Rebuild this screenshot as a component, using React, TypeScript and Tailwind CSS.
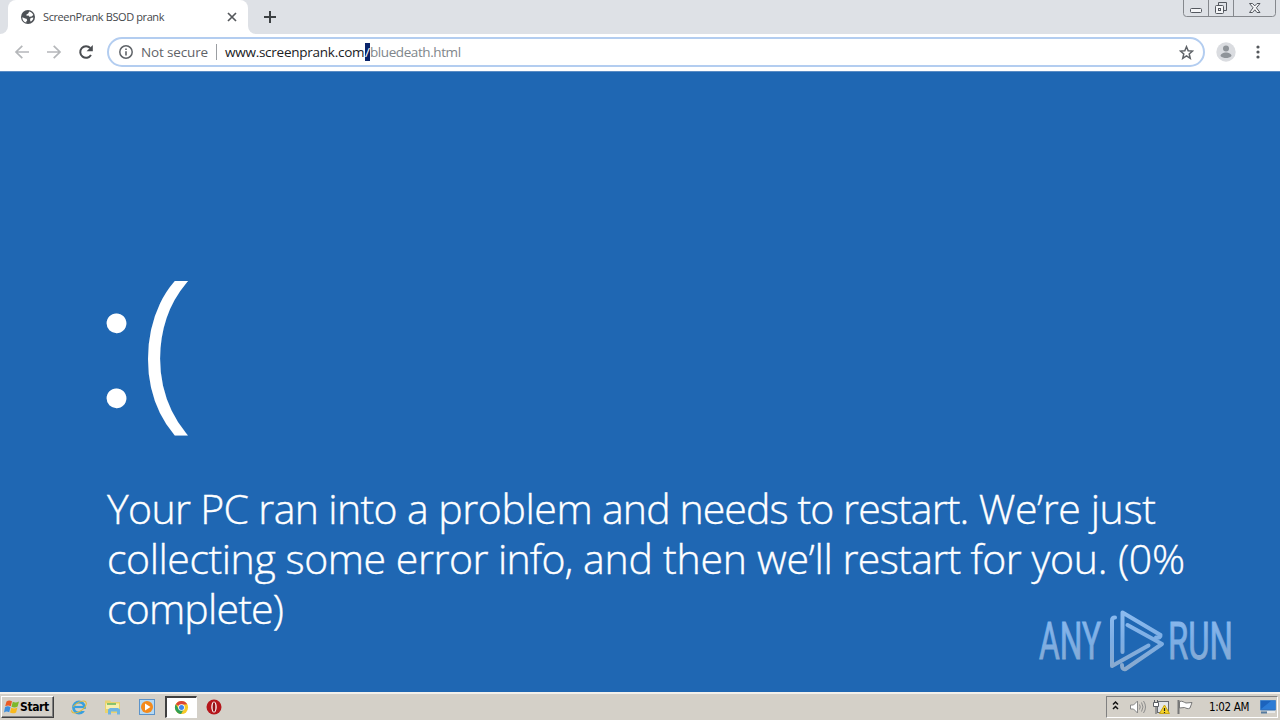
import type { ReactNode } from 'react'

function GlobeIcon() {
  return (
    <svg viewBox="0 0 16 16" className="h-4 w-4">
      <circle cx="8" cy="8" r="7" fill="#4d5156" />
      <path
        d="M2.3 8.2 5.2 9.5l1.4.3.6 1.6-1 1 .2 1.2C3.8 13 2.2 10.8 2.3 8.2zM9.2 2.4c2 .5 3.4 1.700 4.100 3.500l-1.800 1.700-2.200.2-.8-1.300-1.900.2-.2-1.300 1.800-.8zM10.600 9l2.800-.4c-.2 1.800-1.100 3.200-2.600 4.200l-.8-1.700z"
        fill="#fff"
      />
    </svg>
  )
}

function BackIcon() {
  return (
    <svg viewBox="0 0 16 16" className="h-4 w-4" fill="none" stroke="#b5b7ba" strokeWidth="1.700">
      <path d="M15 8H2.500M8.300 1.800 2 8l6.300 6.200" />
    </svg>
  )
}

function ForwardIcon() {
  return (
    <svg viewBox="0 0 16 16" className="h-4 w-4" fill="none" stroke="#b5b7ba" strokeWidth="1.700">
      <path d="M1 8h12.500M7.700 1.800 14 8l-6.300 6.200" />
    </svg>
  )
}

function ReloadIcon() {
  return (
    <svg viewBox="0 0 16 16" className="h-4 w-4">
      <path d="M13 11A5.800 5.800 0 1 1 12.300 4" fill="none" stroke="#4a4d51" strokeWidth="2" />
      <path d="M14.800 1v6.200H8.600z" fill="#4a4d51" />
    </svg>
  )
}

function InfoIcon() {
  return (
    <svg viewBox="0 0 16 16" className="h-4 w-4">
      <circle cx="8" cy="8" r="6.200" fill="none" stroke="#5f6368" strokeWidth="1.500" />
      <path d="M7.200 7.200h1.600v4.200H7.200zM7.200 4.500h1.600v1.600H7.200z" fill="#5f6368" />
    </svg>
  )
}

function StarIcon() {
  return (
    <svg viewBox="0 0 16 16" className="h-[15px] w-[15px]">
      <path
        d="m8 1.800 1.800 4.300 4.700.4-3.600 3.100 1.100 4.600L8 11.700l-4 2.500 1.100-4.600L1.500 6.500l4.700-.4z"
        fill="none"
        stroke="#5f6368"
        strokeWidth="1.600"
      />
    </svg>
  )
}

function WindowButtons() {
  return (
    <svg viewBox="0 0 94 18" className="h-[18px] w-[94px]" fill="none">
      <path d="M.5 0v13.500a3 3 0 0 0 3 3h86a3 3 0 0 0 3-3V0M25.500 0v16.500M50.500 0v16.500" stroke="#85888d" />
      <rect x="7.500" y="8.500" width="11" height="4" rx="1" stroke="#54585f" fill="#f4f5f7" />
      <path d="M35.500 5.500v-3h8v8h-3" stroke="#54585f" />
      <rect x="32.500" y="5.500" width="8" height="8" rx="1" stroke="#54585f" fill="#f4f5f7" />
      <rect x="35.500" y="8.500" width="2" height="2" stroke="#54585f" />
      <path
        d="M66.500 3.500h3l2.300 2.400 2.200-2.400h3l-3.600 4.300 3.600 4.700h-3l-2.200-2.700-2.300 2.700h-3l3.600-4.700z"
        stroke="#54585f"
        fill="#f4f5f7"
      />
    </svg>
  )
}

function TabStrip() {
  return (
    <div className="flex h-[34px] bg-[#dee1e6]">
      <div className="flex w-2 items-end bg-white">
        <div className="h-full w-2 rounded-br-lg bg-[#dee1e6]" />
      </div>
      <div className="flex w-[240px] items-center rounded-t-lg bg-white pr-2 pl-3">
        <GlobeIcon />
        <span className="ml-[7px] flex-1 text-[11px] tracking-[-0.400px] whitespace-nowrap text-[#45484c]">
          ScreenPrank BSOD prank
        </span>
        <svg viewBox="0 0 16 16" className="h-4 w-4" stroke="#55585c" strokeWidth="1.700">
          <path d="m4 4 8 8m0-8-8 8" />
        </svg>
      </div>
      <div className="w-2 bg-white">
        <div className="h-full w-2 rounded-bl-lg bg-[#dee1e6]" />
      </div>
      <svg viewBox="0 0 14 14" className="mt-[10px] ml-[7px] h-[14px] w-[14px]" stroke="#3c4043" strokeWidth="2">
        <path d="M7 1v12M1 7h12" />
      </svg>
      <div className="mr-[3px] ml-auto">
        <WindowButtons />
      </div>
    </div>
  )
}

function Toolbar() {
  return (
    <div className="flex h-[37px] items-center bg-white pb-px">
      <div className="ml-[14px] flex gap-4">
        <BackIcon />
        <ForwardIcon />
        <ReloadIcon />
      </div>
      <div className="ml-[13px] flex h-[30px] w-[1098px] items-center rounded-full border-2 border-[#b3cdf0] pr-[9px] pl-[9px] text-[13.500px]">
        <InfoIcon />
        <span className="ml-[7px] w-[67px] tracking-[-0.150px] whitespace-nowrap text-[#5f6368]">Not secure</span>
        <span className="mx-2 h-4 w-px bg-[#9b9ea2]" />
        <span className="w-[140px] tracking-[-0.250px] whitespace-nowrap text-[#202124]">www.screenprank.com</span>
        <span className="h-[18px] w-[5px] bg-[#0a246a] leading-[18px] text-white">/</span>
        <span className="flex-1 tracking-[-0.420px] whitespace-nowrap text-[#80868b]">bluedeath.html</span>
        <StarIcon />
      </div>
      <svg viewBox="0 0 20 20" className="ml-[11px] h-5 w-5">
        <circle cx="10" cy="10" r="9.700" fill="#dadce0" />
        <circle cx="10" cy="6.500" r="3" fill="#8f9499" />
        <path d="M4.500 14c0-2.200 3-3.500 5.500-3.500s5.500 1.300 5.500 3.500c-1.500 1.500-3.500 2-5.500 2s-4-.5-5.500-2z" fill="#8f9499" />
      </svg>
      <svg viewBox="0 0 4 16" className="ml-5 h-4 w-1" fill="#55585c">
        <circle cx="2" cy="3" r="1.600" />
        <circle cx="2" cy="8" r="1.600" />
        <circle cx="2" cy="13" r="1.600" />
      </svg>
    </div>
  )
}

function Watermark() {
  return (
    <svg viewBox="0 0 220 70" className="absolute right-6 bottom-[17px] h-[70px] w-[220px]">
      <defs>
        <linearGradient id="mark" x1="0" y1="5" x2="0" y2="66" gradientUnits="userSpaceOnUse">
          <stop offset="0" stopColor="#8dbcf0" />
          <stop offset="0.500" stopColor="#7daee4" />
          <stop offset="1" stopColor="#8aa9cb" />
        </linearGradient>
      </defs>
      <g fill="url(#mark)" stroke="url(#mark)" strokeWidth="0.900" fontFamily="Roboto, sans-serif" fontSize="52">
        <text x="3" y="54" textLength="62" lengthAdjust="spacingAndGlyphs">
          ANY
        </text>
        <text x="132" y="54" textLength="65" lengthAdjust="spacingAndGlyphs">
          RUN
        </text>
      </g>
      <g fill="none" stroke="url(#mark)" strokeWidth="4" strokeLinejoin="round" strokeLinecap="round">
        <path d="M120 32.500q5 1 4.500-2.500L86.500 7.500V47" />
        <path d="M79 12.500q-3 0-3 3V61L112.500 40.500" />
        <path d="M86 60q0 5 3.500 4l36.500-25L91.500 20" />
      </g>
    </svg>
  )
}

function CrashPage() {
  return (
    <div className="relative flex-1 overflow-hidden border-t border-[#5b8cc4] bg-[#1f67b3] text-white">
      <div className="mt-[179px] ml-[94px] flex h-[176px] items-end leading-none">
        <span className="w-[43px] font-[Lato,sans-serif] text-[188px] font-light [-webkit-text-stroke:2.4px_white]">
          :
        </span>
        <span className="origin-left scale-x-[1.03] pl-[5px] text-[173px] font-light [-webkit-text-stroke:3px_white]">
          (
        </span>
      </div>
      <div className="mt-[56px] ml-[107px] text-[41px] leading-[50px] font-light whitespace-nowrap [-webkit-text-stroke:0.4px_white]">
        <p>
          <span className="tracking-[-0.650px]">Your PC ran into a</span>
          <span className="tracking-[-0.400px]"> problem</span>
          <span className="tracking-[-0.900px]"> and needs to restart.</span>
          <span className="tracking-[-0.360px]"> We’re just</span>
        </p>
        <p className="tracking-[-0.430px]">
          collecting some error
          <span className="tracking-[-0.800px]"> info,</span>
          <span className="tracking-[-0.250px]"> and then we’ll</span>
          <span className="tracking-[-0.650px]"> restart for</span>
          <span className="tracking-[-0.200px]"> you. (0%</span>
        </p>
        <p className="tracking-[-0.800px]">complete)</p>
      </div>
      <Watermark />
    </div>
  )
}

function WindowsFlag() {
  return (
    <svg viewBox="0 0 16 16" className="h-4 w-4">
      <path d="M2.500 2.500C4.500 1 6 1.200 8 2.300L6.800 7.300C5 6.200 3.200 6.200 1.200 7.300z" fill="#ea5a24" />
      <path d="M8.800 2.800c2 1 3.800 1 6.200-.3l-1.400 5C11.500 8.800 9.500 8.700 7.500 7.700z" fill="#7db82b" />
      <path d="M1 8.200c2-1.200 3.800-1 5.500 0l-1.300 5c-1.700-1-3.500-1-5.200.2z" fill="#3c8ede" />
      <path d="M7.300 8.700c2 1 4 1 6.100-.3l-1.300 5c-2.200 1.300-4.200 1.200-6.100.2z" fill="#f9b91c" />
    </svg>
  )
}

function ExplorerIcon() {
  return (
    <svg viewBox="0 0 18 18" className="h-[18px] w-[18px]">
      <circle cx="9" cy="9.500" r="5.500" fill="none" stroke="#39a0df" strokeWidth="2.800" />
      <path d="M5 9h10" stroke="#39a0df" strokeWidth="2.200" />
      <path d="M11 12h5" stroke="#d4d0c8" strokeWidth="2" />
      <g transform="rotate(-35 9 9)">
        <ellipse cx="9" cy="9" rx="8.500" ry="4.200" fill="none" stroke="#e4b934" strokeDasharray="22 4" />
      </g>
    </svg>
  )
}

function FolderIcon() {
  return (
    <svg viewBox="0 0 18 18" className="h-[18px] w-[18px]">
      <path d="M1 2.500h5l1 1.500h9V15H1z" fill="#ead36d" />
      <path d="M2 5.500h13V11H2z" fill="#f8efae" />
      <path d="M3 6h9" stroke="#65b65c" strokeWidth="1.500" />
      <path d="M4 16.500v-5L6 10h8l2 1.500v5h-3v-3H7v3z" fill="#6eb5e3" />
    </svg>
  )
}

function MediaIcon() {
  return (
    <svg viewBox="0 0 18 18" className="h-[18px] w-[18px]">
      <rect x="1.500" y="1.500" width="15" height="15" fill="#b5d9f3" stroke="#5c93c9" />
      <circle cx="9" cy="9" r="6" fill="#f48a1b" />
      <path d="M7 5.500 12.500 9 7 12.500z" fill="#fff" />
    </svg>
  )
}

function ChromeIcon() {
  return (
    <svg viewBox="0 0 16 16" className="h-[15px] w-[15px]">
      <circle cx="8" cy="8" r="7" fill="#f7c927" />
      <path d="M8 8 1.900 4.500A7 7 0 0 1 14.100 4.500L8 5z" fill="#dc4437" />
      <path d="M1.900 4.500A7 7 0 0 0 7.500 15l3.100-5.500L8 8 5 9.500z" fill="#2f9e56" />
      <circle cx="8" cy="8" r="3.500" fill="#fff" />
      <circle cx="8" cy="8" r="2.700" fill="#4286ec" />
    </svg>
  )
}

function OperaIcon() {
  return (
    <svg viewBox="0 0 16 16" className="h-4 w-4">
      <circle cx="8" cy="8" r="7.500" fill="#b5161b" />
      <ellipse cx="8" cy="8" rx="2.700" ry="5.500" fill="#fff" />
      <ellipse cx="8" cy="8" rx="1.400" ry="4.800" fill="#941015" />
    </svg>
  )
}

function TrayIcons() {
  return (
    <svg viewBox="0 0 84 18" className="h-[18px] w-[84px]" fill="none">
      <path d="m1 6.500 2.500-2.500L6 6.500M1 11l2.500-2.500L6 11" stroke="#111" strokeWidth="1.500" />
      <path d="M18.500 7h3l4-4v12l-4-4h-3z" stroke="#888" fill="#fff" />
      <path d="M27.500 6.500q1.500 2.500 0 5M29.500 4.500q3 4.500 0 9M31.500 3q4 6 0 12" stroke="#8d8d8d" />
      <rect x="45.500" y="3.500" width="11" height="11" fill="#e4e6e8" stroke="#686b70" />
      <path d="M41.500 4.500h5v4h-5zM42.500 2v2.500M45.500 2v2.500M44 8.500V16" stroke="#5b5e63" fill="#fff" />
      <path d="M52.500 7 57.500 15.500H47.500z" fill="#f5d32a" stroke="#c9a514" />
      <path d="M52.500 10v3M52.500 14v1" stroke="#222" strokeWidth="1.200" />
      <path d="M66.500 2v14" stroke="#777" strokeWidth="2" />
      <path d="M67.500 3.500c3-1 4.500 1 6.500 1.500l6-.5-2 5.500c-2 1.500-4 0-5.500-.5l-5 .5z" fill="#fff" stroke="#777" />
    </svg>
  )
}

function QuickLaunch({ children }: { children: ReactNode }) {
  return <div className="grid w-[34px] place-items-center">{children}</div>
}

function Taskbar() {
  return (
    <div className="flex h-7 items-center border-t-2 border-[#f2f0ec] bg-[#d4d0c8] font-[Tahoma,'DejaVu_Sans_Condensed','DejaVu_Sans',sans-serif]">
      <div className="ml-px flex h-[22px] w-[53px] items-center border border-t-white border-r-[#404040] border-b-[#404040] border-l-white pl-0.5 shadow-[inset_-1px_-1px_0_#808080]">
        <WindowsFlag />
        <span className="text-[12px] font-bold tracking-[-0.400px] text-black">Start</span>
      </div>
      <div className="ml-[8px] flex h-[22px] items-center">
        <QuickLaunch>
          <ExplorerIcon />
        </QuickLaunch>
        <QuickLaunch>
          <FolderIcon />
        </QuickLaunch>
        <QuickLaunch>
          <MediaIcon />
        </QuickLaunch>
        <div className="ml-px grid h-[22px] w-8 place-items-center border-t-2 border-r border-b border-l-2 border-t-[#404040] border-r-white border-b-white border-l-[#404040] bg-white">
          <ChromeIcon />
        </div>
        <QuickLaunch>
          <OperaIcon />
        </QuickLaunch>
      </div>
      <div className="mr-0.5 ml-auto flex h-[22px] w-[172px] items-center border border-t-[#808080] border-r-white border-b-white border-l-[#808080] pl-[5px]">
        <TrayIcons />
        <span className="ml-[13px] w-[42px] pt-px text-[11.500px] tracking-[-0.350px] whitespace-nowrap text-black">
          1:02 AM
        </span>
        <svg viewBox="0 0 16 14" className="ml-[9px] h-[14px] w-4">
          <path d="M.5.500h15v9.500H.5z" fill="#1c63bd" stroke="#4383c9" />
          <path d="M1 9 11 1h4v8z" fill="#2c7bd5" />
          <path d="M1 11.500h6v2H1z" fill="#557a9e" />
          <path d="M7 12h8" stroke="#e7e9ea" strokeWidth="2" />
        </svg>
      </div>
    </div>
  )
}

export default function App() {
  return (
    <div className="flex h-screen w-full flex-col overflow-hidden font-['Open_Sans',sans-serif]">
      <TabStrip />
      <Toolbar />
      <CrashPage />
      <Taskbar />
    </div>
  )
}
